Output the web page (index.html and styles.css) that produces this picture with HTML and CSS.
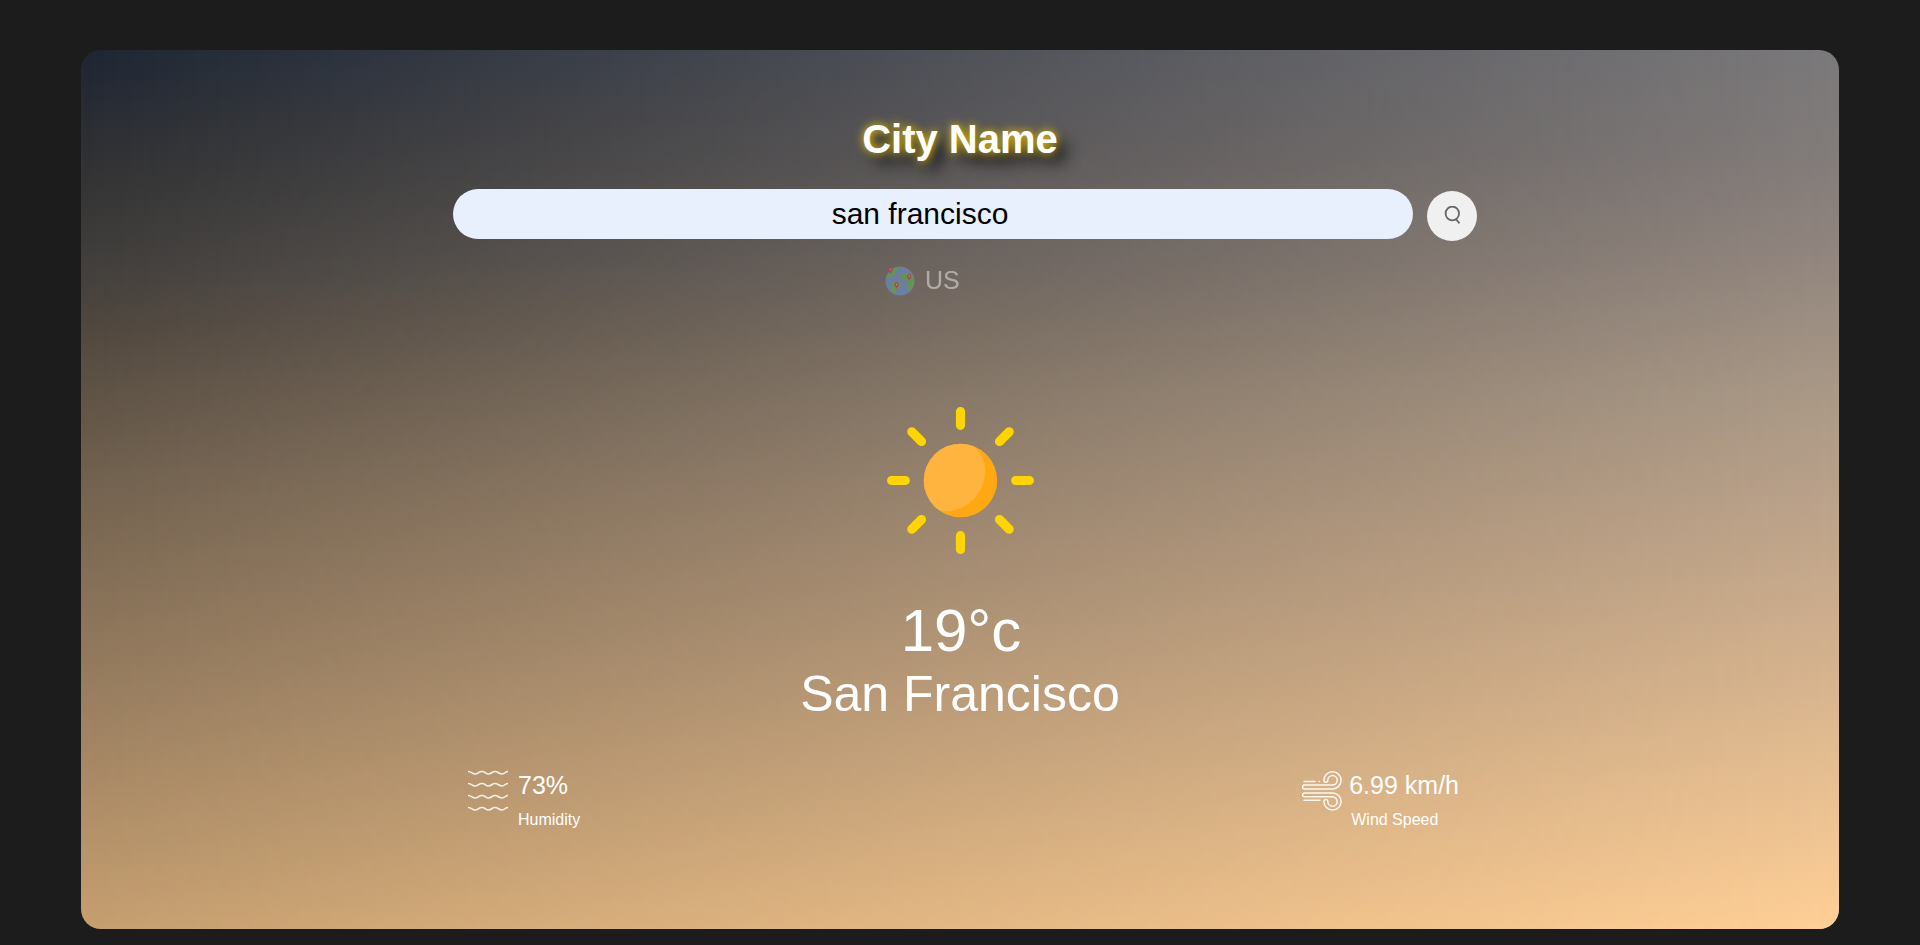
FILE: index.html
```html
<!DOCTYPE html>
<html lang="en">
<head>
<meta charset="utf-8">
<title>Weather</title>
<link rel="stylesheet" href="styles.css">
</head>
<body>
<main class="card">
  <h1 class="title">City Name</h1>
  <div class="search">
    <input class="search-input" type="text" value="san francisco" spellcheck="false">
    <button class="search-button" aria-label="Search">
      <svg width="20" height="20" viewBox="0 0 20 20" fill="none" stroke="#666" stroke-width="1.8"><ellipse cx="10.300" cy="7.500" rx="6.700" ry="6.900"/><path d="M13.700 13L17.500 17.400"/></svg>
    </button>
  </div>
  <div class="country">
    <svg width="30" height="30" viewBox="0 0 30 30">
      <circle cx="15" cy="15" r="14.500" fill="#6a9cf5"/>
      <path fill="#55d04c" d="M5 5Q8 1.500 12 1.500L13 4L10 6L11 9L7 10L5 12L2 11Q2 8 5 5ZM16 8L20 6.500L24 8L28 9.500Q30 14 29 18Q27.500 23 24 25L22 19L23 15L18 14L15 11ZM6 17L10 15L15 17L16 20L12 23L10 28Q6 26 5 23L7 21Z"/>
      <g fill="#f0304c"><circle cx="5.500" cy="3.500" r="2.200"/><path d="M3.400 4.500h4.200L5.500 8z"/><circle cx="24.200" cy="10.200" r="2.200"/><path d="M22 11.200h4.400L24.200 15z"/><circle cx="11.500" cy="18.400" r="2.300"/><path d="M9.300 19.400h4.400L11.500 23z"/></g>
      <g fill="#fff"><circle cx="5.500" cy="3.500" r=".6"/><circle cx="24.200" cy="10.200" r=".6"/><circle cx="11.500" cy="18.400" r=".6"/></g>
    </svg>
    <span class="country-code">US</span>
  </div>
  <section class="weather">
    <svg class="sun" width="148" height="148" viewBox="-74.5 -73.5 148 148">
      <clipPath id="disc"><circle r="36.700"/></clipPath>
      <g stroke="#ffd500" stroke-width="9.200" stroke-linecap="round">
        <path d="M0-68.900V-55.200M0 68.900V55.200M-68.900 0H-55.200M68.900 0H55.200M-48.700-48.700L-39-39M48.700-48.700L39-39M-48.700 48.700L-39 39M48.700 48.700L39 39"/>
      </g>
      <circle r="36.700" fill="#ffa812"/>
      <path clip-path="url(#disc)" fill="#ffb440" d="M-40-40H6Q24.700-27 24.700-9.500A40.200 40.200 0 0 1-15.500 30.700Q-20 30.700-26 28.500L-40 20Z"/>
    </svg>
    <div class="temp">19°c</div>
    <div class="city">San Francisco</div>
  </section>
  <section class="details">
    <div class="detail">
      <svg width="41" height="42" viewBox="0 0 41 42" fill="none" stroke="#fff" stroke-opacity=".85" stroke-width="1.600">
        <path d="M0 1.500C4 1.500 4 4 7 4S10.500 1.500 14 1.500S17.500 4 20.500 4S24 1.500 27 1.500S31 4 34 4S37 1.500 40 1.500"/>
        <path d="M0 13.500C4 13.500 4 16 7 16S10.500 13.500 14 13.500S17.500 16 20.500 16S24 13.500 27 13.500S31 16 34 16S37 13.500 40 13.500"/>
        <path d="M0 25.500C4 25.500 4 28 7 28S10.500 25.500 14 25.500S17.500 28 20.500 28S24 25.500 27 25.500S31 28 34 28S37 25.500 40 25.500"/>
        <path d="M0 37.500C4 37.500 4 40 7 40S10.500 37.500 14 37.500S17.500 40 20.500 40S24 37.500 27 37.500S31 40 34 40S37 37.500 40 37.500"/>
      </svg>
      <div class="reading"><p class="value">73%</p><p class="label">Humidity</p></div>
    </div>
    <div class="detail detail-wind">
      <svg width="41" height="42" viewBox="0 0 41 42" fill="none" stroke="#fff" stroke-opacity=".9" stroke-width="1.500" stroke-linecap="round" stroke-linejoin="round">
        <path d="M2 11.600H13M17 11.600h.5M2 30.200H18"/>
        <path d="M2.500 15H30.500A4.700 4.700 0 1 0 25.800 10.300C25.800 13 21.900 13 21.900 10.300A8.600 8.600 0 1 1 30.500 18.900H2.500A1.950 1.950 0 0 1 2.500 15Z"/>
        <path d="M2.500 26.800H30.500A4.700 4.700 0 1 1 25.800 31.500C25.800 28.800 21.900 28.800 21.900 31.500A8.600 8.600 0 1 0 30.500 22.900H2.500A1.950 1.950 0 0 0 2.500 26.800Z"/>
      </svg>
      <div class="reading"><p class="value">6.99 km/h</p><p class="label">Wind Speed</p></div>
    </div>
  </section>
</main>
</body>
</html>
```
FILE: styles.css
```css
* { box-sizing: border-box; margin: 0; padding: 0; }
body {
  height: 945px;
  overflow: hidden;
  padding: 50px 81px 0;
  background: #1c1c1c;
  color: #fff;
  font-family: Arial, "Liberation Sans", sans-serif;
}
svg { display: block; flex: none; }
.card {
  position: relative;
  isolation: isolate;
  overflow: hidden;
  height: 879px;
  padding-top: 66px;
  border-radius: 20px;
  background: linear-gradient(#1e2633 0%, #2a2d33 8%, #353536 16%, #413e3c 24%, #51483f 32%, #5f5346 39%, #746350 50%, #9a7f60 74%, #c69f70 100%);
}
/* Second vertical ramp, faded in from left to right. */
.card::before {
  content: "";
  position: absolute;
  inset: 0;
  z-index: -1;
  background: linear-gradient(#7b797b 0%, #837c7a 12%, #93877f 24%, #aa9987 39%, #b9a18a 50%, #dab68f 74%, #ffcf96 100%);
  mask-image: linear-gradient(to right, transparent, rgb(0 0 0 / .53) 50%, #000);
}
.title {
  height: 46px;
  font-size: 40px;
  line-height: 46px;
  text-align: center;
  text-shadow: 0 0 10px gold, 10px 10px 16px #000;
}
.search {
  display: flex;
  gap: 14px;
  margin: 27px 0 0 372px;
}
.search-input {
  width: 960px;
  height: 50px;
  padding: 0 26px 0 0;
  border: 0;
  border-radius: 25px;
  outline: 0;
  background: #e8f0fe;
  color: #000;
  font: 30px Arial, "Liberation Sans", sans-serif;
  text-align: center;
}
.search-button {
  display: flex;
  align-items: center;
  justify-content: center;
  width: 50px;
  height: 50px;
  margin-top: 2px;
  border: 0;
  border-radius: 50%;
  background: #f0f0f0;
}
.country {
  display: flex;
  align-items: center;
  gap: 10px;
  height: 30px;
  margin: 25px 0 0 804px;
  font-size: 25px;
  line-height: 28px;
  opacity: .45;
}
.country-code { padding-bottom: 2px; }
.weather {
  display: flex;
  flex-direction: column;
  align-items: center;
  margin-top: 111px;
}
.temp { margin-top: 41px; padding-left: 2px; font-size: 60px; line-height: 69px; }
.city { margin-top: 1px; font-size: 50px; line-height: 57px; }
.details {
  display: flex;
  justify-content: space-between;
  margin-top: 47px;
  padding: 0 380px 0 387px;
}
.detail { display: flex; gap: 9px; }
.detail-wind { gap: 6px; }
.value { margin-top: 1px; font-size: 25px; line-height: 29px; }
.label { margin-top: 11px; font-size: 16px; line-height: 18px; }
.detail-wind .label { margin-left: 2px; }
```
